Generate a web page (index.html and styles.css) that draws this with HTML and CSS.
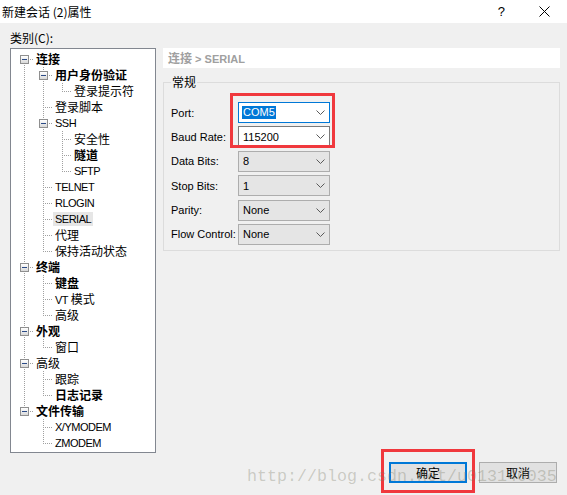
FILE: index.html
```html
<!DOCTYPE html>
<html lang="zh-CN">
<head>
<meta charset="utf-8">
<title>新建会话 (2)属性</title>
<link rel="stylesheet" href="styles.css">
</head>
<body>
<div class="window">
  <header class="titlebar">
    <span class="title">新建会话 (2)属性</span>
    <div class="caption-btns">
      <span class="help">?</span>
      <svg class="close" width="11" height="11" viewBox="0 0 11 11"><path d="M0.5 0.5L10.5 10.5M10.5 0.5L0.5 10.5" stroke="#000" stroke-width="1" fill="none"/></svg>
    </div>
  </header>

  <div class="client">
    <div class="cat-label">类别(C):</div>

    <div class="main">
      <ul class="tree">
        <li class="row"><span class="g f"><i class="exp"></i></span><span class="lbl b">连接</span></li>
        <li class="row"><span class="g p"></span><span class="g t"><i class="exp"></i></span><span class="lbl b">用户身份验证</span></li>
        <li class="row"><span class="g p"></span><span class="g p"></span><span class="g e"></span><span class="lbl">登录提示符</span></li>
        <li class="row"><span class="g p"></span><span class="g t"></span><span class="lbl">登录脚本</span></li>
        <li class="row"><span class="g p"></span><span class="g t"><i class="exp"></i></span><span class="lbl lat">SSH</span></li>
        <li class="row"><span class="g p"></span><span class="g p"></span><span class="g t"></span><span class="lbl">安全性</span></li>
        <li class="row"><span class="g p"></span><span class="g p"></span><span class="g t"></span><span class="lbl b">隧道</span></li>
        <li class="row"><span class="g p"></span><span class="g p"></span><span class="g e"></span><span class="lbl lat">SFTP</span></li>
        <li class="row"><span class="g p"></span><span class="g t"></span><span class="lbl lat">TELNET</span></li>
        <li class="row"><span class="g p"></span><span class="g t"></span><span class="lbl lat">RLOGIN</span></li>
        <li class="row"><span class="g p"></span><span class="g t"></span><span class="lbl lat current">SERIAL</span></li>
        <li class="row"><span class="g p"></span><span class="g t"></span><span class="lbl">代理</span></li>
        <li class="row"><span class="g p"></span><span class="g e"></span><span class="lbl">保持活动状态</span></li>
        <li class="row"><span class="g t"><i class="exp"></i></span><span class="lbl b">终端</span></li>
        <li class="row"><span class="g p"></span><span class="g t"></span><span class="lbl b">键盘</span></li>
        <li class="row"><span class="g p"></span><span class="g t"></span><span class="lbl"><span class="lat">VT</span> 模式</span></li>
        <li class="row"><span class="g p"></span><span class="g e"></span><span class="lbl">高级</span></li>
        <li class="row"><span class="g t"><i class="exp"></i></span><span class="lbl b">外观</span></li>
        <li class="row"><span class="g p"></span><span class="g e"></span><span class="lbl">窗口</span></li>
        <li class="row"><span class="g t"><i class="exp"></i></span><span class="lbl">高级</span></li>
        <li class="row"><span class="g p"></span><span class="g t"></span><span class="lbl">跟踪</span></li>
        <li class="row"><span class="g p"></span><span class="g e"></span><span class="lbl b">日志记录</span></li>
        <li class="row"><span class="g e"><i class="exp"></i></span><span class="lbl b">文件传输</span></li>
        <li class="row"><span class="g"></span><span class="g t"></span><span class="lbl lat">X/YMODEM</span></li>
        <li class="row"><span class="g"></span><span class="g e"></span><span class="lbl lat">ZMODEM</span></li>
      </ul>

      <div class="page">
        <div class="crumb">连接<span class="crumb-lat"> &gt; SERIAL</span></div>
        <fieldset class="group">
          <legend>常规</legend>
          <div class="form">
            <label>Port:</label>
            <div class="combo focused"><span class="hl">COM5</span><svg class="chev" width="9" height="5" viewBox="0 0 9 5"><path d="M0.5 0.5L4.5 4.5L8.5 0.5" fill="none" stroke="#5a5a5a"/></svg></div>
            <label>Baud Rate:</label>
            <div class="combo edit"><span>115200</span><svg class="chev" width="9" height="5" viewBox="0 0 9 5"><path d="M0.5 0.5L4.5 4.5L8.5 0.5" fill="none" stroke="#5a5a5a"/></svg></div>
            <label>Data Bits:</label>
            <div class="combo"><span>8</span><svg class="chev" width="9" height="5" viewBox="0 0 9 5"><path d="M0.5 0.5L4.5 4.5L8.5 0.5" fill="none" stroke="#5a5a5a"/></svg></div>
            <label>Stop Bits:</label>
            <div class="combo"><span>1</span><svg class="chev" width="9" height="5" viewBox="0 0 9 5"><path d="M0.5 0.5L4.5 4.5L8.5 0.5" fill="none" stroke="#5a5a5a"/></svg></div>
            <label>Parity:</label>
            <div class="combo"><span>None</span><svg class="chev" width="9" height="5" viewBox="0 0 9 5"><path d="M0.5 0.5L4.5 4.5L8.5 0.5" fill="none" stroke="#5a5a5a"/></svg></div>
            <label>Flow Control:</label>
            <div class="combo"><span>None</span><svg class="chev" width="9" height="5" viewBox="0 0 9 5"><path d="M0.5 0.5L4.5 4.5L8.5 0.5" fill="none" stroke="#5a5a5a"/></svg></div>
            <span class="mark mark-port"></span>
          </div>
        </fieldset>
      </div>
    </div>

    <div class="buttons">
      <span class="marked"><button class="btn default">确定</button><span class="mark mark-ok"></span></span>
      <button class="btn">取消</button>
    </div>

    <div class="watermark">http://blog.csdn.net/u013140035</div>
  </div>
</div>
</body>
</html>
```

FILE: styles.css
```css
* { box-sizing: border-box; }

html, body { margin: 0; padding: 0; }

body {
  width: 567px;
  height: 495px;
  overflow: hidden;
  background: #f0f0f0;
  color: #000;
  font-family: "Noto Sans CJK SC", sans-serif;
  font-size: 12px;
}

.window {
  width: 567px;
  height: 495px;
  display: flex;
  flex-direction: column;
}

/* caption bar */
.titlebar {
  height: 23px;
  flex: none;
  background: #fff;
  display: flex;
  align-items: center;
  justify-content: space-between;
  padding-left: 2px;
}
.title { line-height: 14px; }
.caption-btns { display: flex; align-items: center; }
.help {
  font-family: "Liberation Sans", sans-serif;
  font-size: 13px;
  margin-right: 34px;
}
.close { margin-right: 17px; }

/* dialog client area */
.client {
  position: relative;
  flex: 1;
  padding: 8px 8px 0 10px;
}
.cat-label {
  line-height: 14px;
  height: 14px;
  margin-bottom: 3px;
}

.main {
  display: flex;
  gap: 7px;
}

/* category tree */
.tree {
  list-style: none;
  margin: 0;
  width: 146px;
  height: 405px;
  flex: none;
  border: 1px solid #828790;
  background: #fff;
  padding: 2px 0 0 4px;
}
.row {
  display: flex;
  height: 16px;
  align-items: center;
}
.g {
  display: block;
  width: 19px;
  height: 16px;
  flex: none;
  background-repeat: no-repeat;
  --vdot: repeating-linear-gradient(to bottom, #a0a0a0 0 1px, transparent 1px 2px);
  --hdot: repeating-linear-gradient(to right, #a0a0a0 0 1px, transparent 1px 2px);
}
.p {
  background-image: var(--vdot);
  background-size: 1px 16px;
  background-position: 9px 0;
}
.t {
  background-image: var(--vdot), var(--hdot);
  background-size: 1px 16px, 10px 1px;
  background-position: 9px 0, 9px 8px;
}
.e {
  background-image: var(--vdot), var(--hdot);
  background-size: 1px 9px, 10px 1px;
  background-position: 9px 0, 9px 8px;
}
.f {
  background-image: var(--vdot), var(--hdot);
  background-size: 1px 8px, 10px 1px;
  background-position: 9px 8px, 9px 8px;
}
.exp {
  display: block;
  width: 9px;
  height: 9px;
  margin: 4px 0 0 5px;
  border: 1px solid #8f8f8f;
  background:
    linear-gradient(#2b4a86, #2b4a86) 1px 3px / 5px 1px no-repeat,
    linear-gradient(#ffffff, #d9d9d9);
}
.lbl {
  padding: 0 2px;
  line-height: 14px;
  white-space: nowrap;
}
.b { font-weight: bold; }
.lat {
  font-family: "Liberation Sans", sans-serif;
  font-size: 11px;
  letter-spacing: -0.5px;
}
.current { background: #e6e6e6; }

/* property page */
.page {
  width: 397px;
  flex: none;
  display: flex;
  flex-direction: column;
}
.crumb {
  height: 20px;
  line-height: 20px;
  background: #fff;
  padding-left: 5px;
  color: #a0a0a0;
  font-weight: bold;
}
.crumb-lat {
  font-family: "Liberation Sans", sans-serif;
  font-size: 11px;
}

.group {
  margin: 7px 0 0 0;
  padding: 13px 0 5px 7px;
  border: 1px solid #dcdcdc;
  min-width: 0;
}
.group legend {
  padding: 0 1px;
  line-height: 14px;
}

.form {
  position: relative;
  display: grid;
  grid-template-columns: 67px 92px;
  row-gap: 3.4px;
  font-family: "Liberation Sans", sans-serif;
  font-size: 11px;
}
.form label { align-self: center; }

.combo {
  height: 21px;
  display: flex;
  align-items: center;
  justify-content: space-between;
  padding: 0 4px 0 4px;
  border: 1px solid #adadad;
  background: #e5e5e5;
}
.combo.focused {
  background: #fff;
  border-color: #0078d7;
  padding-left: 3px;
}
.combo.edit {
  background: #fff;
  border-color: #7a7a7a;
}
.hl {
  background: #0078d7;
  color: #fff;
  padding: 0 1px;
  line-height: 13px;
}
.chev { flex: none; }

/* red annotation frames */
.mark {
  position: absolute;
  border: 3px solid #f0383d;
  pointer-events: none;
}
.mark-port {
  left: 59px;
  top: -9px;
  width: 105px;
  height: 55px;
}

/* dialog buttons */
.buttons {
  display: flex;
  justify-content: flex-end;
  gap: 12px;
  margin-top: 9px;
  padding-right: 2px;
}
.marked { position: relative; display: block; }
.btn {
  display: block;
  width: 78px;
  height: 21px;
  margin: 0;
  padding: 0;
  border: 1px solid #adadad;
  background: #e1e1e1;
  font-family: "Noto Sans CJK SC", sans-serif;
  font-size: 12px;
  line-height: 16px;
  color: #000;
}
.btn.default { border: 2px solid #0078d7; }
.mark-ok {
  left: -8px;
  top: -13px;
  width: 94px;
  height: 44px;
}

.watermark {
  position: absolute;
  left: 247px;
  top: 445px;
  font-family: "Liberation Mono", monospace;
  font-size: 16.67px;
  line-height: 17px;
  color: rgba(120, 120, 100, 0.32);
  white-space: pre;
  pointer-events: none;
}
```
